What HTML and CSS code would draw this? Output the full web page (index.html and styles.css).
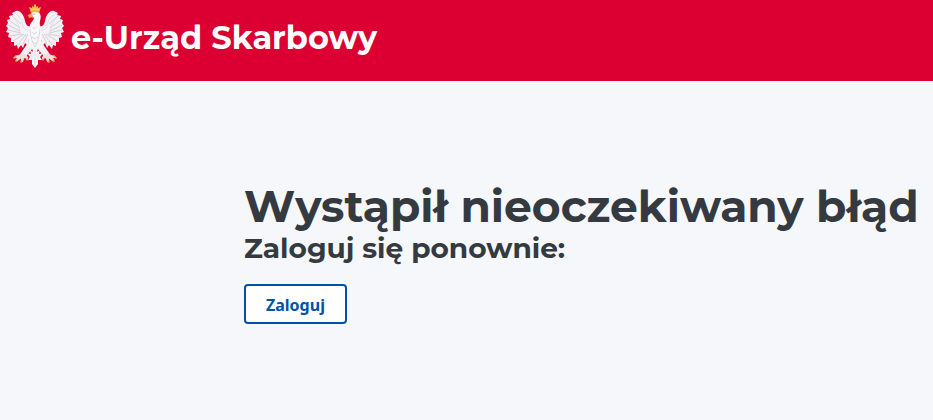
FILE: index.html
```html
<!DOCTYPE html>
<html lang="pl">
<head>
<meta charset="utf-8">
<meta name="viewport" content="width=device-width, initial-scale=1">
<title>e-Urząd Skarbowy</title>
<link rel="stylesheet" href="styles.css">
</head>
<body>
<header class="topbar">
  <svg class="emblem" viewBox="5 4 60 65" aria-hidden="true">
    <g id="wing">
      <path fill="#f3f1f4" d="M33 25 C29 28 26 26 25 21 C24 15 20 10 16 11 L12 13 L13 15 L9 16 L10 19 L7 20 L8 23 L6 26 L8 28 L6 32 L9 33 L8 37 L11 38 L11 42 L14 42 L14 46 L17 45 L18 49 L21 45 L23 48 L25 43 L28 46 L30 41 L33 44 Z"/>
      <path fill="none" stroke="#c6c2c9" stroke-width=".7" d="M12 16 L21 24 M9 20 L20 28 M8 25 L20 31 M8 30 L21 33 M10 36 L22 34 M13 41 L24 34 M18 45 L26 34 M23 44 L28 34 M28 42 L31 34"/>
      <path fill="none" stroke="#dcd9df" stroke-width=".8" d="M16 14 Q23 19 23 27 Q26 32 32 29 M15 19 Q20 25 20 32"/>
      <path fill="#f4f2f5" d="M30 40 L23 50 L19 56 L23 60 L28 54 L33 48 Z"/>
      <path fill="none" stroke="#f1dfdc" stroke-width="2.6" stroke-linecap="round" d="M23 55 L16 57 M22 56 L17 60 M23 56 L22 61 M24 55 L27 58"/>
      <path fill="none" stroke="#e5ad68" stroke-width="1.6" stroke-linecap="round" d="M16 56 L14 58 M17 60 L16 61 M22 61 L21 62 M27 59 L27 60"/>
    </g>
    <use href="#wing" transform="matrix(-1 0 0 1 70 0)"/>
    <path fill="#f8f6f8" d="M31 14 C32 10 39 10 40 14 C42 18 39 21 40 25 C43 32 42 42 38 48 L37 52 L40 50 L39 54 L43 53 L40 57 L42 60 L38 60 L38 64 L35 68 L32 64 L32 60 L28 60 L30 57 L27 53 L31 54 L30 50 L33 52 L32 48 C28 42 27 32 30 25 C31 22 34 20 34 18 L30 16 Z"/>
    <path fill="none" stroke="#d0ccd3" stroke-width=".7" d="M30 29 Q31 41 35 47 Q39 41 40 29 M33 27 L34 29 L36 27 M32 32 L34 34 L37 32 M32 37 L35 39 L38 37 M33 42 L35 44 L37 42 M35 50 V66 M32 54 V59 M38 54 V59"/>
    <path fill="#e5b13e" d="M32 13 L28 15 L29 18 L33 17 Z"/>
    <path fill="#f2b642" d="M31 13 L29 7 L32 8 L32 6 L34 7 L34 5 L35 4 L36 5 L36 7 L38 6 L38 8 L41 7 L39 13 Q35 11 31 13 Z"/>
    <path fill="none" stroke="#f8db79" stroke-width="1" d="M31 10 Q35 8 39 10"/>
    <circle cx="34" cy="14" r=".6" fill="#77717a"/>
  </svg>
  <span class="brand">e-Urząd Skarbowy</span>
</header>
<main class="content">
  <h1 class="title">Wystąpił nieoczekiwany błąd</h1>
  <h2 class="subtitle">Zaloguj się ponownie:</h2>
  <button class="login" type="button">Zaloguj</button>
</main>
</body>
</html>
```
FILE: styles.css
```css
* {
  box-sizing: border-box;
}

body {
  margin: 0;
  background: #f5f7fb;
  color: #343a40;
  font-family: Montserrat, Inter, sans-serif;
}

.topbar {
  display: flex;
  align-items: flex-start;
  gap: 6px;
  padding: 4px 5px 9px;
  background: #dc0032;
  color: #fff;
}

.emblem {
  flex: none;
  width: 60px;
  height: 65px;
}

.brand {
  font-size: 32px;
  font-weight: 700;
  line-height: 68px;
  white-space: nowrap;
}

.content {
  padding: 100px 0 0 244px;
}

.title,
.subtitle {
  margin: 0;
  font-weight: 700;
  white-space: nowrap;
}

.title {
  font-size: 44px;
  line-height: 50px;
}

.subtitle {
  font-size: 28px;
  line-height: 34px;
}

.login {
  height: 40px;
  margin-top: 19px;
  padding: 2px 20px 0;
  border: 2px solid #0052a5;
  border-radius: 4px;
  background: #fff;
  color: #0052a5;
  font-family: "Noto Sans", sans-serif;
  font-size: 16px;
  font-weight: 700;
}
```
